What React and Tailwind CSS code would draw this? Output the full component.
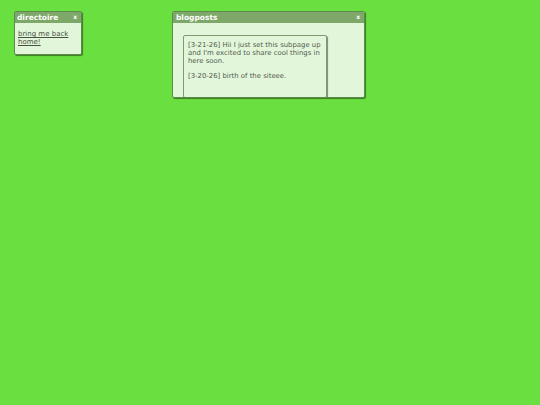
export default function App() {
  const font = { fontFamily: '"DejaVu Sans", Verdana, sans-serif' };
  return (
    <div className="relative w-[540px] h-[405px] bg-[#6ae040] overflow-hidden" style={font}>
      {/* directory window */}
      <div className="absolute left-[14px] top-[11px] w-[68px] h-[44px] flex flex-col border border-[#5e8a4c] rounded-[2px] bg-[#e2f7da] shadow-[1px_1px_1px_rgba(0,0,0,0.45)]">
        <div className="h-[11px] shrink-0 flex items-center justify-between px-[2px] bg-[#7ea86a] text-white text-[7.5px] font-bold leading-none">
          <span>directoire</span>
          <span className="pr-[2px] mb-[2px] text-[6px]">x</span>
        </div>
        <div className="px-[3px] pt-[7px] text-[7px] leading-[8px] text-[#4a4f45]">
          <a href="#" className="underline">bring me back home!</a>
        </div>
      </div>

      {/* blog window */}
      <div className="absolute left-[172px] top-[11px] w-[193px] h-[87px] flex flex-col border border-[#5e8a4c] rounded-[2px] bg-[#e2f7da] shadow-[1px_1px_1px_rgba(0,0,0,0.45)] overflow-hidden">
        <div className="h-[11px] shrink-0 flex items-center justify-between px-[3px] bg-[#7ea86a] text-white text-[7.5px] font-bold leading-none">
          <span>blogposts</span>
          <span className="pr-[1px] mb-[2px] text-[6px]">x</span>
        </div>
        <div className="pl-[10px] pt-[12px]">
          <div className="w-[144px] h-[63px] border border-[#7d9a70] rounded-[2px] bg-[#e2f7da] shadow-[1px_1px_1px_rgba(0,0,0,0.45)] pl-[4px] pr-0 pt-[5px] text-[6.9px] leading-[8px] text-[#55594f]">
            <p>[3-21-26] Hii I just set this subpage up and I'm excited to share cool things in here soon.</p>
            <p className="mt-[7px]">[3-20-26] birth of the siteee.</p>
          </div>
        </div>
      </div>
    </div>
  );
}
